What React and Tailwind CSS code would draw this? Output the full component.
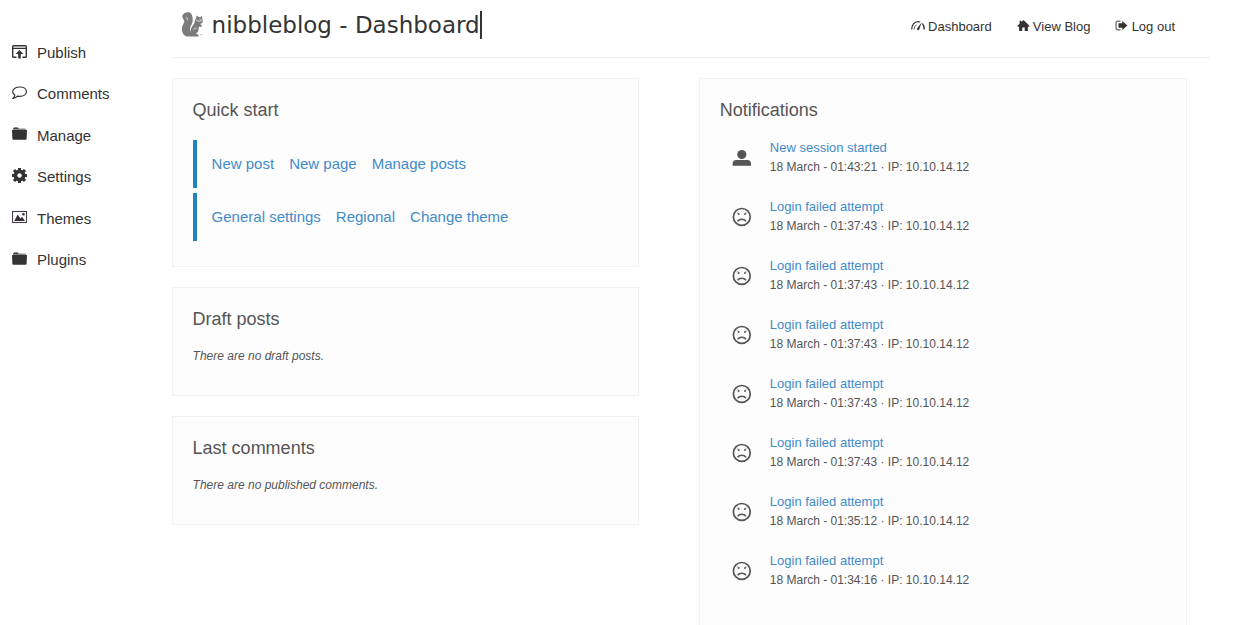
import React from "react";

const PublishIcon = () => (
  <svg width="15" height="14" viewBox="0 0 15 14" fill="none" stroke="#333" strokeWidth="1.4">
    <path d="M4.5 12.3H1.6Q.7 12.3.7 11.4V1.6Q.7.7 1.6.7H13.4Q14.3.7 14.3 1.6V11.4Q14.3 12.3 13.4 12.3H10.5M.7 3.4H14.3" />
    <path d="M7.5 5L11.4 9H8.8V13.5H6.2V9H3.6Z" fill="#333" stroke="none" />
  </svg>
);
const CommentIcon = () => (
  <svg width="15" height="14" viewBox="0 0 15 14" fill="none" stroke="#333" strokeWidth="1.2">
    <path d="M7.9 1C11.7 1 14.4 3 14.4 5.7S11.7 10.4 7.9 10.4Q6.7 10.4 5.6 10.1Q4 11.9 1.2 12.3Q2.7 10.9 2.8 8.9Q.7 7.6.7 5.7C.7 3 4 1 7.9 1Z" />
  </svg>
);
const FolderIcon = () => (
  <svg width="15" height="14" viewBox="0 0 15 14">
    <path d="M1 3V1.5Q1 .7 2 .7H5.8Q6.4.7 6.7 1.5H13Q14 1.5 14 3Z" fill="#888" />
    <path d="M2 .5H5.8L6.7 1.7H1.5Z" fill="#333" />
    <path d="M0 3H15L14.6 12Q14.6 12.7 13.8 12.7H1.2Q.4 12.7.4 12Z" fill="#333" />
  </svg>
);
const GearIcon = () => (
  <svg className="-mt-px" width="15" height="15" viewBox="0 0 15 15" fill="none" stroke="#333">
    <circle cx="7.5" cy="7.5" r="4.1" strokeWidth="3.8" />
    <path d="M7.5 0V2.2M7.5 12.8V15M0 7.5H2.2M12.8 7.5H15M2 2L3.8 3.8M11.2 11.2L13 13M13 2L11.2 3.8M3.8 11.2L2 13" strokeWidth="3.1" />
  </svg>
);
const PictureIcon = () => (
  <svg width="15" height="14" viewBox="0 0 15 14">
    <rect x=".5" y="1.5" width="14" height="11" fill="none" stroke="#49394d" strokeWidth="1.1" />
    <path d="M2.2 11L5.7 4.5L8.4 8.4L10 6.8L13 11Z" fill="#333" />
    <circle cx="11.4" cy="4.2" r="1.3" fill="#333" />
  </svg>
);
const GaugeIcon = () => (
  <svg width="14" height="12" viewBox="0 0 14 12" fill="none" stroke="#333">
    <path d="M.7 9.5C.7 5 3.3 1.6 7 1.6Q8.3 1.6 9.2 2M11.3 3.5C12.6 4.8 13.3 7.2 13.3 9.5" strokeWidth="1.3" />
    <path d="M3 9.5Q3.1 6.6 5.4 4.7" strokeWidth=".8" />
    <path d="M10.7 2.2L8.2 9.6Q6.8 10.8 5.9 9.3Q5.7 8.4 6.5 7.9Z" fill="#333" stroke="none" />
  </svg>
);
const HomeIcon = () => (
  <svg width="13" height="12" viewBox="0 0 13 12" fill="#333">
    <path d="M6.5 0L12.7 6L11.9 6.8H10.9V11H7.7V7.6H5.3V11H2.1V6.8H1.1L.3 6L2.6 3.8V.8H4.4V2Z" />
  </svg>
);
const LogoutIcon = () => (
  <svg width="13" height="12" viewBox="0 0 13 12">
    <path d="M5.5 1.2H3Q1 1.2 1 3.2V7.8Q1 9.8 3 9.8H5.5" fill="none" stroke="#666" strokeWidth="1.2" />
    <path d="M7.3 .9L12.4 5.5L7.3 10.1V7.8H3.5V3.2H7.3Z" fill="#333" />
  </svg>
);
const SquirrelLogo = () => (
  <svg width="23" height="26" viewBox="0 0 23 26" fill="#7b7b7b">
    <path d="M7.4.3C3.9.1 1 2.4 1.4 5.3C1.7 7.2 3.9 8.2 3.3 10C2.7 11.8.9 13.5.9 17.2C.9 21.8 3.8 24.6 8 24.6H16.5C18 24.6 18.2 22.8 16.8 22.4L14.9 21.8C17.2 20.3 18 18.2 17.5 16L18.7 14.3L20 15.2L21 13.6L19.1 12C21.4 11.4 22.6 9.4 21.5 7.5L20.9 4.2L18.5 5.2L15.5 3.4L15.1 6.5C13.7 7.8 13.5 9.4 13.5 11L11.2 14.5C10 16.2 9.5 18 9.8 20C8.7 18 8.9 16 9.9 13.8C11.3 11.3 12 9.3 11.7 6.2C11.4 3 10 .6 7.4.3Z" />
    <path d="M4.9 5.4Q7.2 5.6 6.3 8M12.6 17.5Q14.2 15.5 15.7 16.3M15 8L17.7 9.4L21.3 8.3" fill="none" stroke="#fff" strokeWidth=".7" />
    <circle cx="19.1" cy="7.1" r=".6" fill="#fff" />
    <circle cx="20.2" cy="22.6" r=".7" />
  </svg>
);
const UserIcon = () => (
  <svg width="20" height="20" viewBox="0 0 20 20" fill="#555">
    <circle cx="9.8" cy="6.5" r="4.6" />
    <path d="M.6 17.8V16Q.6 12 4.3 12H15.3Q19 12 19 16V17.8Z" />
  </svg>
);
const SadIcon = () => (
  <svg width="20" height="20" viewBox="0 0 20 20" fill="none" stroke="#555">
    <circle cx="9.8" cy="9.9" r="8.4" strokeWidth="1.7" />
    <path d="M5.6 14.2Q7 12.2 9.8 12.2T14 14.2" strokeWidth="1.5" />
    <path d="M4.8 6.2L6.4 5.1M14.8 6.2L13.2 5.1" strokeWidth=".5" />
    <circle cx="6.6" cy="7" r="1" fill="#555" stroke="none" />
    <circle cx="13" cy="7" r="1" fill="#555" stroke="none" />
  </svg>
);

const menu = [
  ["Publish", PublishIcon],
  ["Comments", CommentIcon],
  ["Manage", FolderIcon],
  ["Settings", GearIcon],
  ["Themes", PictureIcon],
  ["Plugins", FolderIcon],
];
const topLinks = [
  ["Dashboard", GaugeIcon],
  ["View Blog", HomeIcon],
  ["Log out", LogoutIcon],
];
const quickLinks = [
  ["New post", "New page", "Manage posts"],
  ["General settings", "Regional", "Change theme"],
];
const times = ["01:43:21", "01:37:43", "01:37:43", "01:37:43", "01:37:43", "01:37:43", "01:35:12", "01:34:16"];

function Card({ title, className, children }) {
  return (
    <section className={`border border-[#f1f1f1] bg-[#fdfdfd] pt-5 ${className}`}>
      <h2 className="text-[18px] leading-[22px] text-[#555]">{title}</h2>
      {children}
    </section>
  );
}

export default function App() {
  return (
    <div className="flex h-[625px] overflow-hidden bg-white font-['Liberation_Sans',Arial,sans-serif] text-[#333]">
      <nav className="w-[172px] shrink-0 pt-[32.3px] pl-3">
        {menu.map(([label, Icon]) => (
          <a key={label} className="flex h-[41.45px] items-center gap-[10px] text-[15px]">
            <span className="-mt-[3px]"><Icon /></span>
            {label}
          </a>
        ))}
      </nav>
      <main className="w-[1037.5px] shrink-0">
        <header className="flex h-[58px] items-start justify-between border-b border-[#eee] pr-[34.5px] pl-[9px]">
          <div className="flex pt-[11px]">
            <span className="mt-[1px]"><SquirrelLogo /></span>
            <h1 className="ml-[7.6px] h-7 border-r-2 border-[#333] font-['DejaVu_Sans',sans-serif] text-[23px] leading-[28px] whitespace-nowrap">nibbleblog - Dashboard</h1>
          </div>
          <div className="flex gap-[25px] pt-[17px] text-[13px] leading-[20px]">
            {topLinks.map(([label, Icon]) => (
              <a key={label} className="flex items-center gap-[3.2px]">
                <span className="-mt-[2px]"><Icon /></span>
                {label}
              </a>
            ))}
          </div>
        </header>
        <div className="flex items-start gap-[60px] pt-5">
          <div className="flex w-[467px] flex-col gap-5">
            <Card title="Quick start" className="h-[189px] px-[19.6px]">
              <div className="mt-[19px] flex flex-col gap-[5px]">
                {quickLinks.map((row) => (
                  <div key={row[0]} className="flex h-12 items-center gap-[15px] border-l-4 border-[#2184be] pl-[15px] text-[15px] text-[#428bca]">
                    {row.map((label) => <a key={label}>{label}</a>)}
                  </div>
                ))}
              </div>
            </Card>
            <Card title="Draft posts" className="h-[109px] px-[19.6px]">
              <p className="mt-[17px] text-[12px] leading-[18px] text-[#555] italic">There are no draft posts.</p>
            </Card>
            <Card title="Last comments" className="h-[109px] px-[19.6px]">
              <p className="mt-[17px] text-[12px] leading-[18px] text-[#555] italic">There are no published comments.</p>
            </Card>
          </div>
          <Card title="Notifications" className="h-[620px] w-[488px] px-[19.8px]">
            <ul className="mt-[17px]">
              {times.map((time, i) => (
                <li key={i} className="flex h-[59px] gap-[18px] pl-3">
                  <span className="mt-[10px]">{i === 0 ? <UserIcon /> : <SadIcon />}</span>
                  <div>
                    <a className="block text-[13px] leading-[20px] text-[#428bca]">{i === 0 ? "New session started" : "Login failed attempt"}</a>
                    <p className="text-[12px] leading-[18px] text-[#555]">18 March - {time} · IP: 10.10.14.12</p>
                  </div>
                </li>
              ))}
            </ul>
          </Card>
        </div>
      </main>
    </div>
  );
}
